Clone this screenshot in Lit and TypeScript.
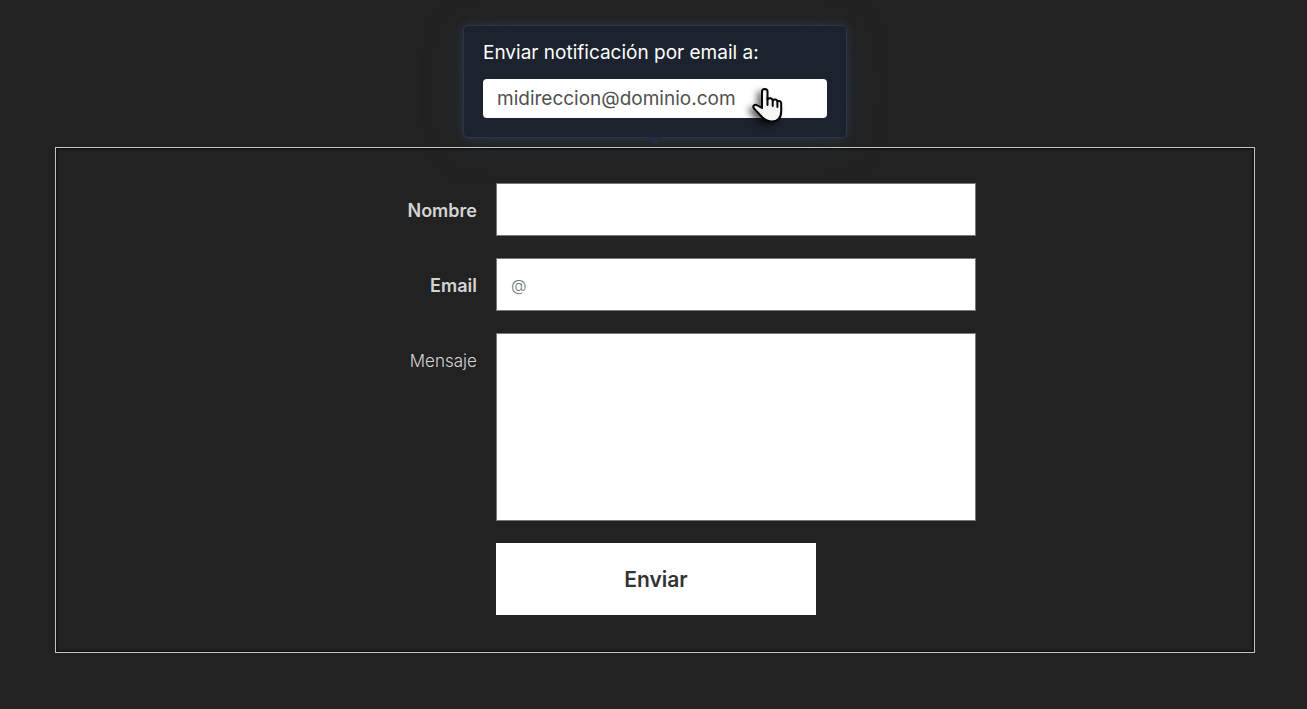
import { LitElement, html, css } from "lit";
import { customElement } from "lit/decorators.js";

@customElement("app-root")
export class AppRoot extends LitElement {
  static styles = css`
    :host {
      display: block;
      box-sizing: border-box;
      min-height: 100vh;
      padding: 25px 52px 56px 55px;
      background: #222;
      color: #d4d4d4;
      font-family: "Inter", "Liberation Sans", sans-serif;
      font-size: 18px;
    }
    * {
      box-sizing: border-box;
    }
    .popover {
      position: relative;
      width: 384px;
      max-width: 100%;
      margin: 0 auto 9px;
      padding: 14px 19px 19px;
      border: 1px solid #2b364a;
      border-radius: 5px;
      background: #1c222e;
      box-shadow: 0 0 10px rgba(62, 82, 108, 0.45), 0 6px 40px rgba(44, 62, 84, 0.25);
    }
    .popover::after {
      content: "";
      position: absolute;
      z-index: 1;
      top: 100%;
      left: 50%;
      margin-left: -8px;
      border: 8px solid transparent;
      border-bottom: 0;
      border-top-color: #222b3f;
    }
    .popover label {
      display: block;
      margin-bottom: 13px;
      color: #fff;
      font-size: 19px;
      line-height: 26px;
    }
    .address {
      display: block;
      width: 100%;
      height: 39px;
      padding: 0 14px;
      border: 0;
      border-radius: 4px;
      background: #fff;
      color: #505050;
      font: 19px "Inter", "Liberation Sans", sans-serif;
    }
    .hand {
      position: absolute;
      top: 56px;
      right: 54px;
      width: 44px;
      height: 48px;
      overflow: visible;
      filter: drop-shadow(-4px 3px 3px rgba(0, 0, 0, 0.6));
      pointer-events: none;
    }
    .panel {
      position: relative;
      display: grid;
      grid-template-columns: 13fr minmax(0, 480px) 8fr;
      gap: 22px 19px;
      padding: 35px 0 37px;
      border: 1px solid #c4c4c4;
      box-shadow: inset 0 0 0 2px #161616;
    }
    .panel label {
      grid-column: 1;
      padding-top: 16px;
      font-size: 17px;
      font-weight: 300;
      line-height: 24px;
      text-align: right;
    }
    .panel .required {
      font-size: 18px;
      font-weight: 600;
    }
    .field {
      grid-column: 2;
      display: block;
      width: 100%;
      height: 53px;
      padding: 0 14px;
      border: 1px solid #777;
      border-radius: 0;
      background: #fff;
      color: #333;
      font: 300 16px "Inter", "Liberation Sans", sans-serif;
    }
    .field::placeholder {
      color: #777;
      opacity: 1;
    }
    .message {
      height: 188px;
      padding: 14px;
      resize: none;
    }
    .send {
      grid-column: 2;
      width: 320px;
      max-width: 100%;
      height: 72px;
      border: 0;
      background: #fff;
      color: #333;
      font: 600 21px "Inter", "Liberation Sans", sans-serif;
    }
  `;

  render() {
    return html`
      <div class="popover">
        <label for="address">Enviar notificación por email a:</label>
        <input class="address" id="address" type="email" value="midireccion@dominio.com" />
        <svg class="hand" viewBox="0 0 44 48" aria-hidden="true">
          <path
            d="M14 26V9.500C14 6 19.500 6 19.500 9.500V17.500C21 15.500 24.500 16 24.700 18.500C26.300 16.800 29.200 17.300 29.400 19.500C31 18.300 33.200 19 33.200 21.500V29C33.200 36 29.500 39.500 23.500 39.500C18.500 39.500 15.500 37 12.500 33.500L6 26.500C4 23.500 7 22 9.500 23.500Z"
            fill="#f6f6f6"
            stroke="#050505"
            stroke-width="2"
            stroke-linejoin="round"
          />
          <path
            d="M19.500 16V23M24.700 18V24M29.400 19V25"
            fill="none"
            stroke="#050505"
            stroke-width="2"
            stroke-linecap="round"
          />
        </svg>
      </div>
      <form class="panel" @submit=${(e: Event) => e.preventDefault()}>
        <label class="required" for="name">Nombre</label>
        <input class="field" id="name" type="text" required />
        <label class="required" for="email">Email</label>
        <input class="field" id="email" type="email" placeholder="@" required />
        <label for="message">Mensaje</label>
        <textarea class="field message" id="message"></textarea>
        <button class="send" type="submit">Enviar</button>
      </form>
    `;
  }
}
